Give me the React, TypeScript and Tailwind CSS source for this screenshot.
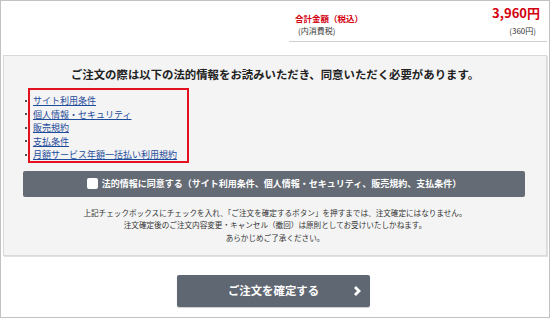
import React, { useState } from 'react';

const links = [
  'サイト利用条件',
  '個人情報・セキュリティ',
  '販売規約',
  '支払条件',
  '月額サービス年額一括払い利用規約',
];

function App() {
  const [agreed, setAgreed] = useState(false);

  return (
    <div
      className="relative w-[550px] h-[318px] overflow-hidden border border-[#c2c2c2] bg-white text-[#333]"
      style={{ fontFamily: '"Noto Sans CJK JP", "Liberation Sans", sans-serif' }}
    >
      {/* Total */}
      <div className="flex justify-end pr-[2px]">
        <div className="w-[258px] h-[41px] border-b border-[#cfcfcf] pl-[6px] pr-[7px]">
          <div className="flex justify-between items-start">
            <span className="mt-[11px] text-[8.5px] font-bold text-[#d3000f] leading-[12px]">合計金額（税込）</span>
            <span className="mt-[4px] text-[13px] font-bold text-[#d3000f] leading-[16px]">3,960円</span>
          </div>
          <div className="flex justify-between text-[8px] leading-[12px] mt-[1px]">
            <span className="pl-[3px]">(内消費税)</span>
            <span className="pr-[4px]">(360円)</span>
          </div>
        </div>
      </div>

      {/* Legal info panel */}
      <div className="mx-[2px] mt-[13px] h-[201px] border border-[#d9d9d9] bg-[#f4f4f4] shadow-[1px_1px_0_#e2e2e2]">
        <h2 className="pt-[10px] text-center text-[11.4px] font-bold leading-[16px] text-[#222]">
          ご注文の際は以下の法的情報をお読みいただき、同意いただく必要があります。
        </h2>

        <div className="relative mt-[12px] ml-[21px]">
          <ul className="text-[9px] leading-[13.5px]">
            {links.map((l) => (
              <li key={l} className="flex items-center">
                <span className="w-[2px] h-[2px] bg-[#555] mr-[6px]" />
                <a href="#" className="text-[#1f4b9b] underline">
                  {l}
                </a>
              </li>
            ))}
          </ul>
          <div className="absolute left-[3px] top-[-6px] w-[161px] h-[75px] border-2 border-[#e3101f]" />
        </div>

        <label className="mt-[9px] mx-[19px] w-[502px] h-[26px] flex items-center justify-center gap-[4px] rounded-[2px] bg-[#646b75] cursor-pointer">
          <span
            onClick={() => setAgreed(!agreed)}
            className="w-[11px] h-[11px] rounded-[2px] bg-white flex items-center justify-center text-[8px] text-[#646b75]"
          >
            {agreed ? '✓' : ''}
          </span>
          <span className="text-[9px] font-bold text-white leading-[12px]">
            法的情報に同意する（サイト利用条件、個人情報・セキュリティ、販売規約、支払条件）
          </span>
        </label>

        <div className="mt-[10px] text-center text-[7.6px] leading-[12.5px] text-[#333]">
          <p>上記チェックボックスにチェックを入れ、「ご注文を確定するボタン」を押すまでは、注文確定にはなりません。</p>
          <p>注文確定後のご注文内容変更・キャンセル（撤回）は原則としてお受けいたしかねます。</p>
          <p>あらかじめご了承ください。</p>
        </div>
      </div>

      {/* Confirm button */}
      <button className="mt-[19px] ml-[176px] w-[193px] h-[32px] relative flex items-center justify-center rounded-[2px] bg-[#5f6772] text-white shadow-[0_1px_1px_rgba(0,0,0,0.2)]">
        <span className="text-[11.4px] font-bold">ご注文を確定する</span>
        <svg
          className="absolute right-[9px] top-[11px]"
          width="8"
          height="10"
          viewBox="0 0 8 10"
        >
          <path d="M2 1 L6 5 L2 9" fill="none" stroke="white" strokeWidth="2.8" />
        </svg>
      </button>
    </div>
  );
}

export default App;
